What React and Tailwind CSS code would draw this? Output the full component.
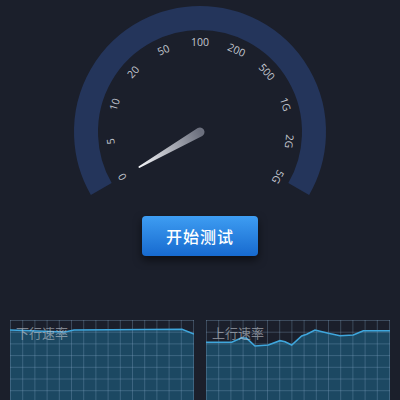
import React from 'react';

const LABELS = ['0', '5', '10', '20', '50', '100', '200', '500', '1G', '2G', '5G'];
const CX = 200;
const CY = 132;

const down_points = [[0, 10], [55, 12], [64, 10], [172, 9.3], [184, 14]];
const up_points = [
    [0, 22.3], [25.7, 22.3], [35.7, 17.7], [40.7, 18.3], [49, 26], [62.3, 25],
    [74, 20.7], [79, 21.7], [85.7, 25], [95.7, 16], [100.7, 14.3], [109, 10],
    [122.3, 13.3], [134, 15.7], [147.3, 15], [157.3, 10.7], [184, 10.7],
];

// Speed dial with log-scale labels
const Gauge = () => {
    const r = 114;
    const rad = (deg) => (deg * Math.PI) / 180;
    const sx = CX + r * Math.sin(rad(-120));
    const sy = CY - r * Math.cos(rad(-120));
    const ex = CX + r * Math.sin(rad(120));
    const ey = CY - r * Math.cos(rad(120));

    return (
        <svg width="400" height="200" viewBox="0 0 400 200" className="block">
            <defs>
                <linearGradient id="needle" gradientUnits="userSpaceOnUse" x1="70" y1="0" x2="0" y2="0">
                    <stop offset="0" stopColor="#f4f5f8" />
                    <stop offset="1" stopColor="#6c707e" />
                </linearGradient>
            </defs>
            <path
                d={`M${sx},${sy} A${r},${r} 0 1 1 ${ex},${ey}`}
                fill="none"
                stroke="#24355b"
                strokeWidth="24"
            />
            {LABELS.map((label, i) => {
                const deg = -120 + 24 * i;
                const x = CX + 90 * Math.sin(rad(deg));
                const y = CY - 90 * Math.cos(rad(deg));
                return (
                    <text
                        key={label}
                        x={x}
                        y={y}
                        transform={`rotate(${deg} ${x} ${y})`}
                        textAnchor="middle"
                        dominantBaseline="central"
                        fontSize="10.5"
                        fill="#c3c7d0"
                        fontFamily="'Open Sans', 'Liberation Sans', sans-serif"
                    >
                        {label}
                    </text>
                );
            })}
            <g transform={`translate(${CX} ${CY}) rotate(150)`}>
                <path
                    d="M0,-4.5 L70,-0.9 A0.9,0.9 0 0 1 70,0.9 L0,4.5 A4.5,4.5 0 0 1 0,-4.5 Z"
                    fill="url(#needle)"
                />
            </g>
        </svg>
    );
};

const RateChart = ({ title, points }) => {
    const w = 184;
    const h = 80;
    const line = points.map(([x, y], i) => `${i ? 'L' : 'M'}${x},${y}`).join(' ');
    const area = `${line} L${w},${h} L0,${h} Z`;
    const cols = Array.from({ length: 16 }, (_, i) => 0.5 + (i * (w - 1)) / 15);
    const rows = Array.from({ length: 8 }, (_, i) => 0.5 + i * 11.7);

    return (
        <div className="relative w-[184px] h-[80px]">
            <svg width={w} height={h} viewBox={`0 0 ${w} ${h}`} className="block">
                <path d={area} fill="#1c4862" />
                {cols.map((x) => (
                    <line key={`c${x}`} x1={x} y1="0" x2={x} y2={h} stroke="rgba(130,165,195,0.32)" strokeWidth="1" />
                ))}
                {rows.map((y) => (
                    <line key={`r${y}`} x1="0" y1={y} x2={w} y2={y} stroke="rgba(130,165,195,0.32)" strokeWidth="1" />
                ))}
                <path d={line} fill="none" stroke="#3fa6dc" strokeWidth="1.6" />
            </svg>
            <span className="absolute left-[6px] top-[5px] text-[13px] leading-[16px] text-[#c4c8d0]/60 font-['Noto_Sans_CJK_SC',sans-serif]">
                {title}
            </span>
        </div>
    );
};

export default function App() {
    return (
        <div className="w-[400px] h-[400px] overflow-hidden bg-[#1b1f2b] flex flex-col items-center">
            <Gauge />
            <button className="mt-[16px] w-[116px] h-[40px] rounded-[4px] bg-gradient-to-b from-[#3e9df2] to-[#176acf] shadow-[0_4px_8px_rgba(0,0,0,0.55)] text-white text-[16px] font-medium tracking-[1px] font-['Noto_Sans_CJK_SC',sans-serif]">
                开始测试
            </button>
            <div className="mt-[64px] w-full px-[10px] flex gap-[12px]">
                <RateChart title="下行速率" points={down_points} />
                <RateChart title="上行速率" points={up_points} />
            </div>
        </div>
    );
}
